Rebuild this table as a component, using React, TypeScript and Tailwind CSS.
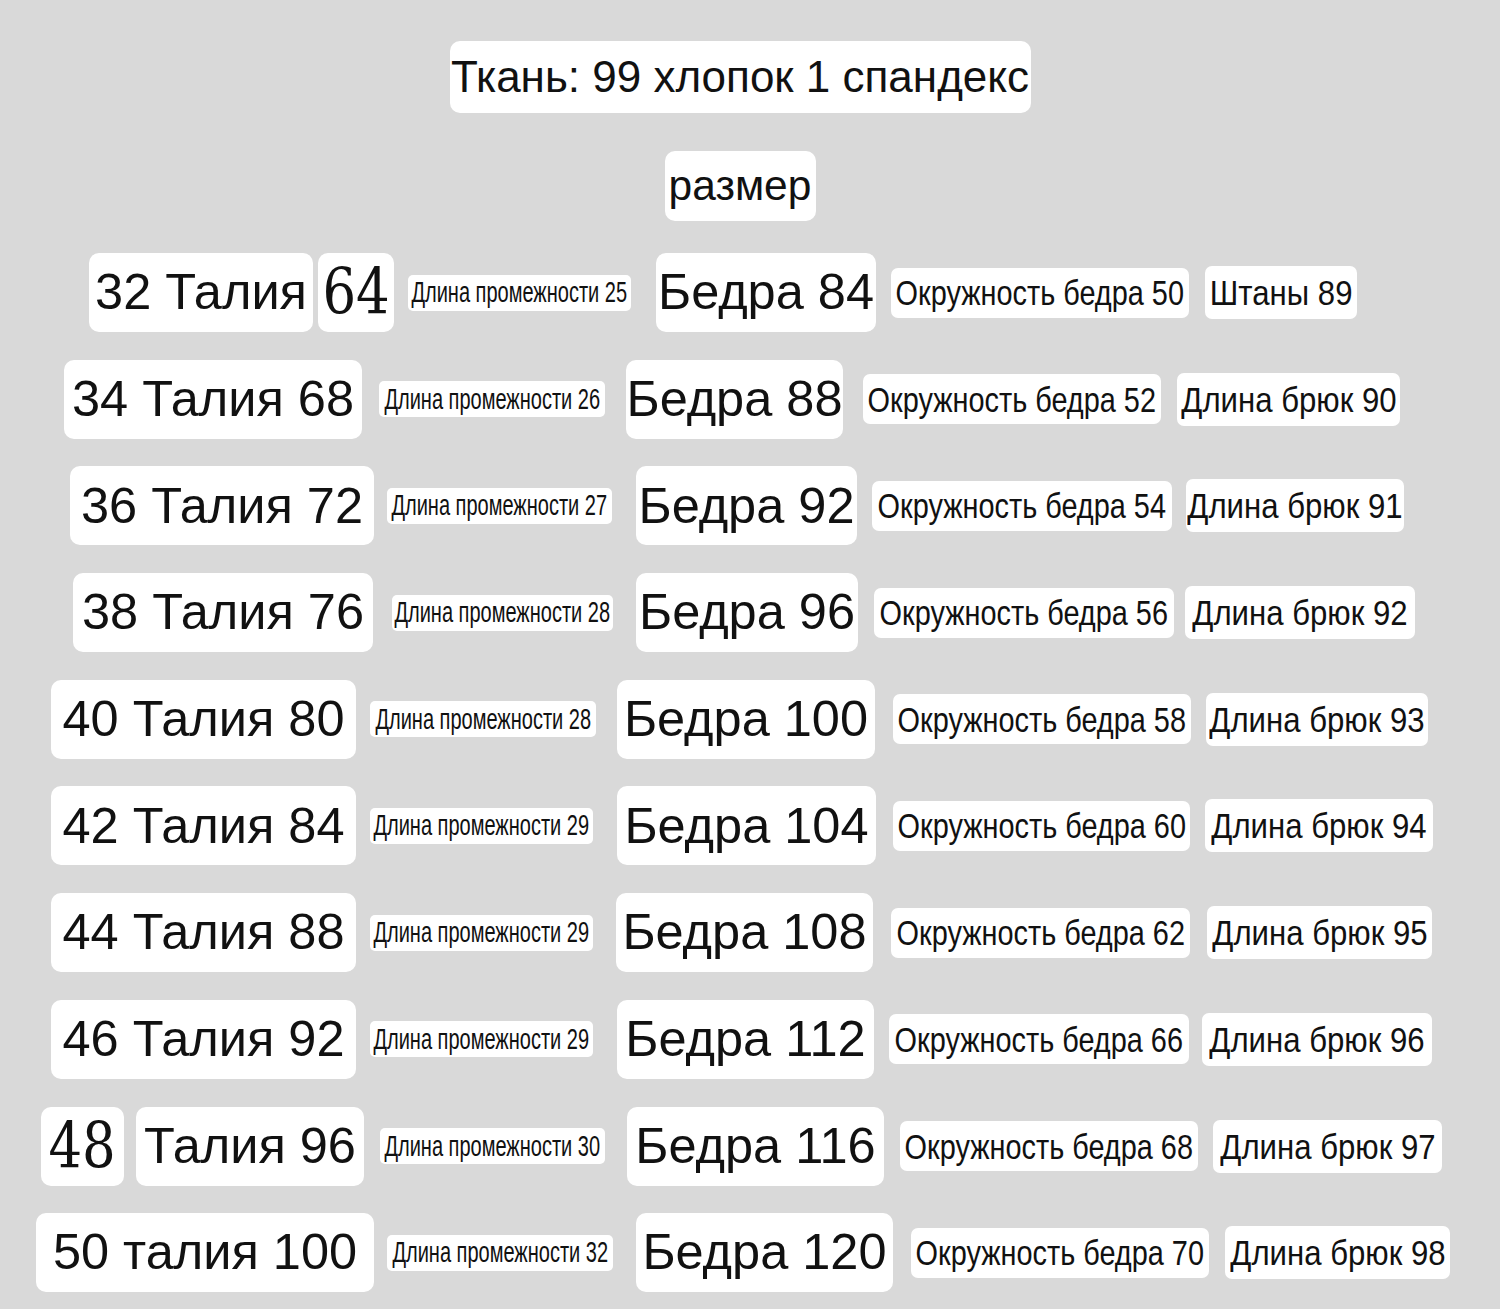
import React from "react";

type Kind = "big" | "serif" | "dp" | "okr" | "db";

type Item = {
    kind: Kind;
    text: string;
    // left gap + width, written out in full
    cls: string;
};

const kindBox: Record<Kind, string> = {
    big: "h-[79px] rounded-[10px]",
    serif: "h-[79px] rounded-[10px]",
    dp: "h-[36px] rounded-[5px]",
    okr: "h-[50px] rounded-[7px]",
    db: "h-[53px] rounded-[7px]",
};

const kindText: Record<Kind, string> = {
    big: "text-[50.5px]",
    serif: "text-[63px] scale-x-[0.84] [font-family:DejaVu_Serif,Liberation_Serif,Noto_Serif,Times,serif]",
    dp: "text-[29px] scale-x-[0.69]",
    okr: "text-[35px] scale-x-[0.825]",
    db: "text-[35px] scale-x-[0.89]",
};

const rows: { pl: string; items: Item[] }[] = [
    {
        pl: "pl-[89px]",
        items: [
            { kind: "big", text: "32 Талия", cls: "w-[224px]" },
            { kind: "serif", text: "64", cls: "ml-[5px] w-[76px]" },
            { kind: "dp", text: "Длина промежности 25", cls: "ml-[14px] w-[223px]" },
            { kind: "big", text: "Бедра 84", cls: "ml-[25px] w-[220px]" },
            { kind: "okr", text: "Окружность бедра 50", cls: "ml-[15px] w-[298px]" },
            { kind: "db", text: "Штаны 89", cls: "ml-[16px] w-[152px]" },
        ],
    },
    {
        pl: "pl-[64px]",
        items: [
            { kind: "big", text: "34 Талия 68", cls: "w-[298px]" },
            { kind: "dp", text: "Длина промежности 26", cls: "ml-[17px] w-[226px]" },
            { kind: "big", text: "Бедра 88", cls: "ml-[21px] w-[217px]" },
            { kind: "okr", text: "Окружность бедра 52", cls: "ml-[20px] w-[298px]" },
            { kind: "db", text: "Длина брюк 90", cls: "ml-[16px] w-[223px]" },
        ],
    },
    {
        pl: "pl-[70px]",
        items: [
            { kind: "big", text: "36 Талия 72", cls: "w-[304px]" },
            { kind: "dp", text: "Длина промежности 27", cls: "ml-[13px] w-[225px]" },
            { kind: "big", text: "Бедра 92", cls: "ml-[24px] w-[221px]" },
            { kind: "okr", text: "Окружность бедра 54", cls: "ml-[15px] w-[300px]" },
            { kind: "db", text: "Длина брюк 91", cls: "ml-[14px] w-[218px]" },
        ],
    },
    {
        pl: "pl-[73px]",
        items: [
            { kind: "big", text: "38 Талия 76", cls: "w-[300px]" },
            { kind: "dp", text: "Длина промежности 28", cls: "ml-[19px] w-[221px]" },
            { kind: "big", text: "Бедра 96", cls: "ml-[23px] w-[222px]" },
            { kind: "okr", text: "Окружность бедра 56", cls: "ml-[16px] w-[300px]" },
            { kind: "db", text: "Длина брюк 92", cls: "ml-[11px] w-[230px]" },
        ],
    },
    {
        pl: "pl-[51px]",
        items: [
            { kind: "big", text: "40 Талия 80", cls: "w-[305px]" },
            { kind: "dp", text: "Длина промежности 28", cls: "ml-[14px] w-[226px]" },
            { kind: "big", text: "Бедра 100", cls: "ml-[21px] w-[258px]" },
            { kind: "okr", text: "Окружность бедра 58", cls: "ml-[18px] w-[298px]" },
            { kind: "db", text: "Длина брюк 93", cls: "ml-[15px] w-[222px]" },
        ],
    },
    {
        pl: "pl-[51px]",
        items: [
            { kind: "big", text: "42 Талия 84", cls: "w-[305px]" },
            { kind: "dp", text: "Длина промежности 29", cls: "ml-[14px] w-[223px]" },
            { kind: "big", text: "Бедра 104", cls: "ml-[24px] w-[259px]" },
            { kind: "okr", text: "Окружность бедра 60", cls: "ml-[17px] w-[297px]" },
            { kind: "db", text: "Длина брюк 94", cls: "ml-[15px] w-[228px]" },
        ],
    },
    {
        pl: "pl-[51px]",
        items: [
            { kind: "big", text: "44 Талия 88", cls: "w-[305px]" },
            { kind: "dp", text: "Длина промежности 29", cls: "ml-[14px] w-[223px]" },
            { kind: "big", text: "Бедра 108", cls: "ml-[23px] w-[257px]" },
            { kind: "okr", text: "Окружность бедра 62", cls: "ml-[18px] w-[299px]" },
            { kind: "db", text: "Длина брюк 95", cls: "ml-[17px] w-[225px]" },
        ],
    },
    {
        pl: "pl-[51px]",
        items: [
            { kind: "big", text: "46 Талия 92", cls: "w-[305px]" },
            { kind: "dp", text: "Длина промежности 29", cls: "ml-[14px] w-[223px]" },
            { kind: "big", text: "Бедра 112", cls: "ml-[24px] w-[257px]" },
            { kind: "okr", text: "Окружность бедра 66", cls: "ml-[15px] w-[300px]" },
            { kind: "db", text: "Длина брюк 96", cls: "ml-[13px] w-[230px]" },
        ],
    },
    {
        pl: "pl-[41px]",
        items: [
            { kind: "serif", text: "48", cls: "w-[83px]" },
            { kind: "big", text: "Талия 96", cls: "ml-[12px] w-[228px]" },
            { kind: "dp", text: "Длина промежности 30", cls: "ml-[16px] w-[225px]" },
            { kind: "big", text: "Бедра 116", cls: "ml-[22px] w-[257px]" },
            { kind: "okr", text: "Окружность бедра 68", cls: "ml-[16px] w-[298px]" },
            { kind: "db", text: "Длина брюк 97", cls: "ml-[15px] w-[229px]" },
        ],
    },
    {
        pl: "pl-[36px]",
        items: [
            { kind: "big", text: "50 талия 100", cls: "w-[338px]" },
            { kind: "dp", text: "Длина промежности 32", cls: "ml-[13px] w-[226px]" },
            { kind: "big", text: "Бедра 120", cls: "ml-[23px] w-[257px]" },
            { kind: "okr", text: "Окружность бедра 70", cls: "ml-[18px] w-[298px]" },
            { kind: "db", text: "Длина брюк 98", cls: "ml-[16px] w-[225px]" },
        ],
    },
];

function Pill({ item }: { item: Item }) {
    return (
        <div className={`${kindBox[item.kind]} ${item.cls} shrink-0 bg-white flex items-center justify-center overflow-visible`}>
            <span className={`${kindText[item.kind]} block whitespace-nowrap leading-none text-[#111]`}>
                {item.text}
            </span>
        </div>
    );
}

export default function App() {
    return (
        <div className="w-[1500px] h-[1309px] bg-[#d9d9d9] overflow-hidden pt-[41px] [font-family:Liberation_Sans,Arial,sans-serif] text-[#111]">
            <div className="flex flex-col items-center pr-[20px]">
                <div className="h-[72px] w-[581px] bg-white rounded-[10px] flex items-center justify-center">
                    <span className="text-[44px] leading-none whitespace-nowrap">Ткань: 99 хлопок 1 спандекс</span>
                </div>
                <div className="mt-[38px] h-[70px] w-[151px] bg-white rounded-[10px] flex items-center justify-center">
                    <span className="text-[42.5px] leading-none whitespace-nowrap">размер</span>
                </div>
            </div>

            <div className="mt-[32px] flex flex-col gap-[27.7px]">
                {rows.map((row, index) => (
                    <div className={`${row.pl} flex items-center h-[79px]`} key={index}>
                        {row.items.map((item, i) => (
                            <Pill item={item} key={i} />
                        ))}
                    </div>
                ))}
            </div>
        </div>
    );
}
